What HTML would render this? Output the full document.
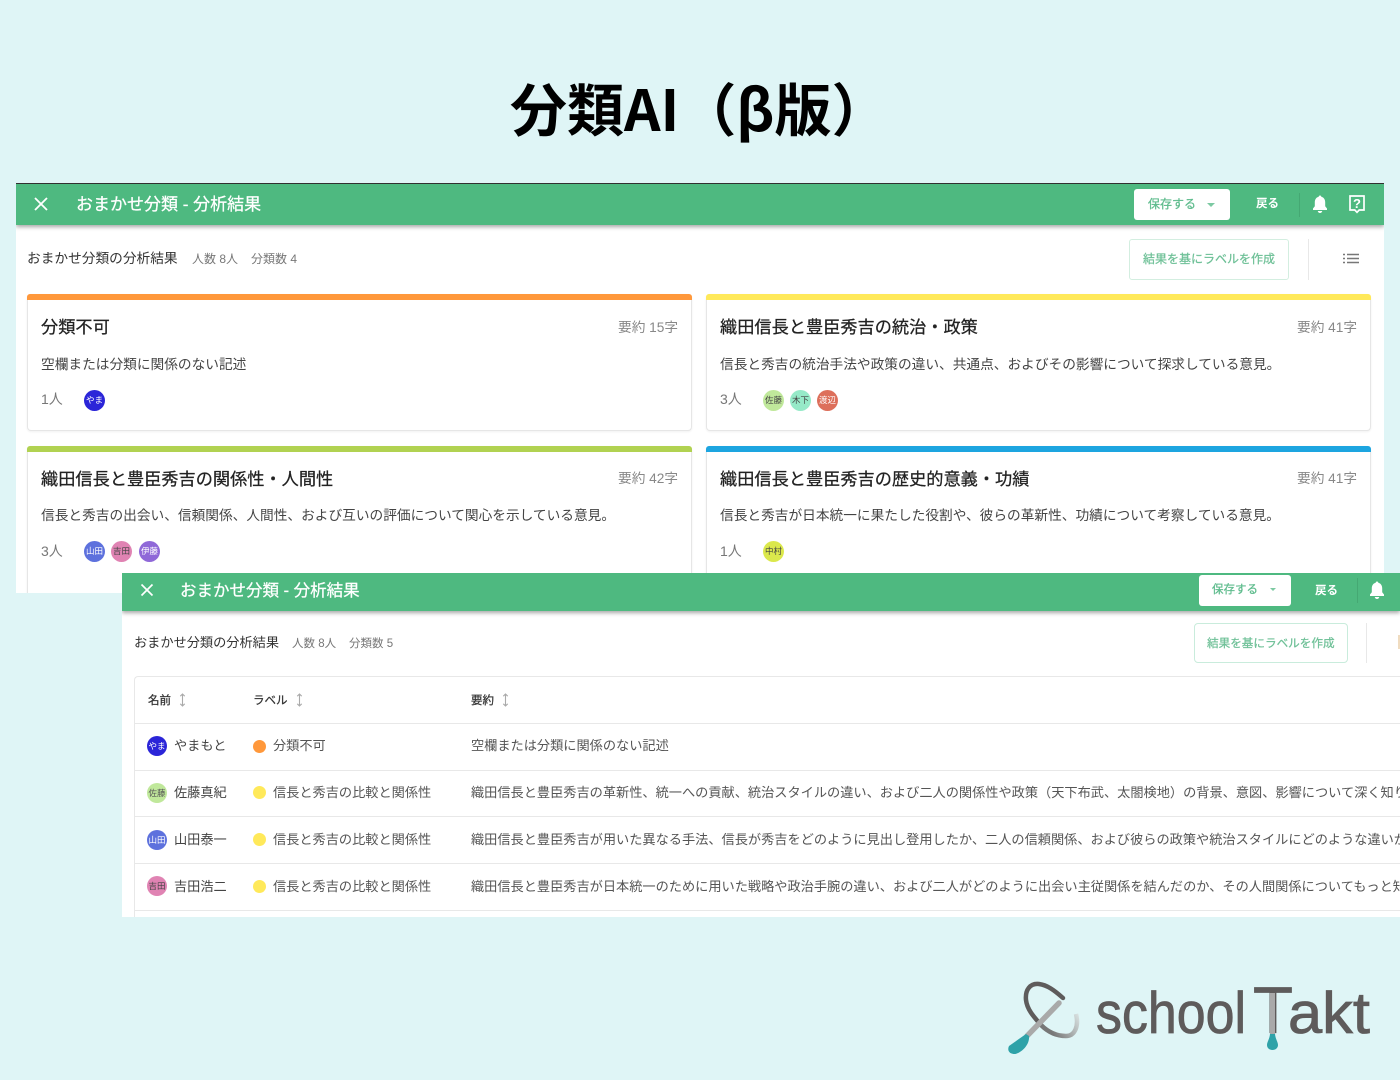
<!DOCTYPE html>
<html lang="ja">
<head>
<meta charset="utf-8">
<title>分類AI（β版）</title>
<style>
html,body{margin:0;padding:0}
body{width:1400px;height:1080px;position:relative;overflow:hidden;background:#dff5f6;font-family:"Liberation Sans","Noto Sans CJK JP",sans-serif;color:#333}
.a{position:absolute;box-sizing:border-box}
.t{position:absolute;white-space:nowrap;line-height:20px;height:20px;margin-top:1px}
.m{-webkit-text-stroke:.25px currentColor}
.panel{position:absolute;background:#fff;overflow:hidden;filter:blur(.3px)}
.bar{position:absolute;left:0;background:#4eb980;box-shadow:0 2px 4px rgba(0,0,0,.35)}
.card{position:absolute;box-sizing:border-box;width:665px;background:#fff;border:1px solid #e6e6e6;border-top:0;border-radius:4px;box-shadow:0 1px 2px rgba(0,0,0,.06)}
.card i{position:absolute;left:-1px;right:-1px;top:0;height:6px;border-radius:3px 3px 0 0}
.av{position:absolute;width:21px;height:21px;border-radius:50%;text-align:center;line-height:21px;font-size:8.5px;white-space:nowrap;overflow:hidden}
.dot{position:absolute;width:13px;height:13px;border-radius:50%}
.btn{position:absolute;box-sizing:border-box;background:#fff;border-radius:3px}
.ln{position:absolute;background:#e8e8e8;height:1px}
</style>
</head>
<body>

<div class="t" style="left:510px;top:66px;height:80px;line-height:80px;font-size:57px;font-weight:700;color:#000;font-family:'Noto Sans CJK JP',sans-serif">分類AI（β版）</div>

<!-- panel 1 -->
<div class="panel" style="left:16px;top:183px;width:1368px;height:410px">
  <div class="a" style="left:0;top:0;width:1368px;height:1px;background:#333"></div>
  <div class="bar" style="top:1px;width:1368px;height:41px"></div>
  <svg class="a" style="left:17px;top:13px" width="16" height="16" viewBox="0 0 16 16"><path d="M2 2L14 14M14 2L2 14" stroke="#fff" stroke-width="1.8" fill="none"/></svg>
  <div class="t m" style="left:60px;top:11px;font-size:17px;color:#fff">おまかせ分類 - 分析結果</div>
  <div class="btn" style="left:1118px;top:6px;width:96px;height:31px"></div>
  <div class="t m" style="left:1132px;top:10px;font-size:12px;color:#5dbb8c">保存する</div>
  <div class="a" style="left:1191px;top:20px;border:4px solid transparent;border-top-color:#7cc9a2;border-bottom:0"></div>
  <div class="t" style="left:1240px;top:10px;font-size:11.5px;font-weight:700;color:#fff">戻る</div>
  <div class="a" style="left:1283px;top:10px;width:1px;height:24px;background:#45a873"></div>
  <svg class="a" style="left:1295px;top:11px" width="18" height="20" viewBox="0 0 18 20"><path d="M9 1.5c-.9 0-1.3.6-1.3 1.3C5 3.5 3.800 5.800 3.800 8.500v3.800L2 14.500V16h14v-1.500l-1.800-2.200V8.500c0-2.700-1.200-5-3.900-5.700C10.300 2.100 9.900 1.500 9 1.500z" fill="#fff"/><path d="M6.800 17a2.200 2 0 0 0 4.400 0z" fill="#fff"/></svg>
  <svg class="a" style="left:1332px;top:11px" width="18" height="20" viewBox="0 0 18 20"><path d="M2 2h14v14h-4.800L9 18.300 6.800 16H2z" fill="none" stroke="#fff" stroke-width="1.700"/><text x="9" y="14" text-anchor="middle" font-size="13" font-weight="700" fill="#fff" font-family="Liberation Sans">?</text></svg>

  <div class="t" style="left:11px;top:65px;font-size:13.7px;color:#333">おまかせ分類の分析結果</div>
  <div class="t" style="left:176px;top:65px;font-size:12px;color:#777">人数 8人</div>
  <div class="t" style="left:235px;top:65px;font-size:12px;color:#777">分類数 4</div>
  <div class="btn" style="left:1113px;top:56px;width:160px;height:41px;border:1.5px solid #d3eee0"></div>
  <div class="t m" style="left:1127px;top:65px;font-size:12px;color:#6ec097">結果を基にラベルを作成</div>
  <div class="a" style="left:1292px;top:56px;width:1px;height:41px;background:#e8e8e8"></div>
  <svg class="a" style="left:1327px;top:70px" width="17" height="11" viewBox="0 0 17 11"><path d="M0 1.500h2M4 1.500h12M0 5.500h2M4 5.500h12M0 9.500h2M4 9.500h12" stroke="#777" stroke-width="1.500" fill="none"/></svg>

  <!-- cards -->
  <div class="card" style="left:11px;top:111px;height:137px"><i style="background:#ff983b"></i></div>
  <div class="t m" style="left:25px;top:133px;font-size:17.2px;color:#222">分類不可</div>
  <div class="t" style="left:602px;top:134px;font-size:13.7px;color:#888">要約 15字</div>
  <div class="t" style="left:25px;top:171px;font-size:13.7px;color:#444">空欄または分類に関係のない記述</div>
  <div class="t" style="left:25px;top:205px;font-size:14px;color:#777">1人</div>
  <div class="av" style="left:68px;top:207px;background:#2b25d8;color:#fff">やま</div>

  <div class="card" style="left:690px;top:111px;height:137px"><i style="background:#ffe95a"></i></div>
  <div class="t m" style="left:704px;top:133px;font-size:17.2px;color:#222">織田信長と豊臣秀吉の統治・政策</div>
  <div class="t" style="left:1281px;top:134px;font-size:13.7px;color:#888">要約 41字</div>
  <div class="t" style="left:704px;top:171px;font-size:13.7px;color:#444">信長と秀吉の統治手法や政策の違い、共通点、およびその影響について探求している意見。</div>
  <div class="t" style="left:704px;top:205px;font-size:14px;color:#777">3人</div>
  <div class="av" style="left:747px;top:207px;background:#c0e89b;color:#444">佐藤</div>
  <div class="av" style="left:774px;top:207px;background:#96eac8;color:#444">木下</div>
  <div class="av" style="left:801px;top:207px;background:#dd6f5b;color:#fff">渡辺</div>

  <div class="card" style="left:11px;top:263px;height:160px"><i style="background:#b1d251"></i></div>
  <div class="t m" style="left:25px;top:285px;font-size:17.2px;color:#222">織田信長と豊臣秀吉の関係性・人間性</div>
  <div class="t" style="left:602px;top:285px;font-size:13.7px;color:#888">要約 42字</div>
  <div class="t" style="left:25px;top:322px;font-size:13.7px;color:#444">信長と秀吉の出会い、信頼関係、人間性、および互いの評価について関心を示している意見。</div>
  <div class="t" style="left:25px;top:357px;font-size:14px;color:#777">3人</div>
  <div class="av" style="left:68px;top:358px;background:#5d71dd;color:#fff">山田</div>
  <div class="av" style="left:95px;top:358px;background:#e083b3;color:#444">吉田</div>
  <div class="av" style="left:123px;top:358px;background:#8f68d8;color:#fff">伊藤</div>

  <div class="card" style="left:690px;top:263px;height:160px"><i style="background:#1da5e0"></i></div>
  <div class="t m" style="left:704px;top:285px;font-size:17.2px;color:#222">織田信長と豊臣秀吉の歴史的意義・功績</div>
  <div class="t" style="left:1281px;top:285px;font-size:13.7px;color:#888">要約 41字</div>
  <div class="t" style="left:704px;top:322px;font-size:13.7px;color:#444">信長と秀吉が日本統一に果たした役割や、彼らの革新性、功績について考察している意見。</div>
  <div class="t" style="left:704px;top:357px;font-size:14px;color:#777">1人</div>
  <div class="av" style="left:747px;top:358px;background:#dbe84c;color:#444">中村</div>
</div>

<!-- panel 2 -->
<div class="panel" style="left:122px;top:573px;width:1278px;height:344px">
  <div class="bar" style="top:0;width:1278px;height:38px"></div>
  <svg class="a" style="left:18px;top:10px" width="14" height="14" viewBox="0 0 14 14"><path d="M1.500 1.500L12.500 12.500M12.500 1.500L1.500 12.500" stroke="#fff" stroke-width="1.700" fill="none"/></svg>
  <div class="t m" style="left:58px;top:7px;font-size:16.5px;color:#fff">おまかせ分類 - 分析結果</div>
  <div class="btn" style="left:1077px;top:2px;width:92px;height:31px"></div>
  <div class="t m" style="left:1090px;top:6px;font-size:11.5px;color:#5dbb8c">保存する</div>
  <div class="a" style="left:1148px;top:15px;border:3.5px solid transparent;border-top-color:#7cc9a2;border-bottom:0"></div>
  <div class="t" style="left:1193px;top:7px;font-size:11.5px;font-weight:700;color:#fff">戻る</div>
  <div class="a" style="left:1235px;top:5px;width:1px;height:25px;background:#45a873"></div>
  <svg class="a" style="left:1246px;top:7px" width="18" height="20" viewBox="0 0 18 20"><path d="M9 1.500c-.9 0-1.300.6-1.300 1.300C5 3.500 3.800 5.800 3.800 8.500v3.800L2 14.500V16h14v-1.500l-1.800-2.200V8.500c0-2.700-1.200-5-3.900-5.700C10.300 2.100 9.900 1.500 9 1.500z" fill="#fff"/><path d="M6.800 17a2.200 2 0 0 0 4.400 0z" fill="#fff"/></svg>

  <div class="t" style="left:12px;top:59px;font-size:13.2px;color:#333">おまかせ分類の分析結果</div>
  <div class="t" style="left:170px;top:60px;font-size:11.5px;color:#777">人数 8人</div>
  <div class="t" style="left:227px;top:60px;font-size:11.5px;color:#777">分類数 5</div>
  <div class="btn" style="left:1072px;top:50px;width:154px;height:40px;border:1.5px solid #c9ecdc;border-radius:4px"></div>
  <div class="t m" style="left:1085px;top:60px;font-size:11.6px;color:#6ec097">結果を基にラベルを作成</div>
  <div class="a" style="left:1244px;top:50px;width:1px;height:40px;background:#e8e8e8"></div>
  <div class="a" style="left:1276px;top:62px;width:2px;height:14px;background:#f0dcc0"></div>

  <!-- table -->
  <div class="a" style="left:12px;top:103px;width:1266px;height:241px;border-left:1px solid #e8e8e8;border-top:1px solid #e8e8e8;border-radius:4px 0 0 0"></div>
  <div class="ln" style="left:12px;top:150px;width:1266px"></div>
  <div class="ln" style="left:12px;top:197px;width:1266px"></div>
  <div class="ln" style="left:12px;top:243px;width:1266px"></div>
  <div class="ln" style="left:12px;top:290px;width:1266px"></div>
  <div class="ln" style="left:12px;top:337px;width:1266px"></div>

  <div class="t m" style="left:26px;top:117px;font-size:11.5px;color:#333">名前</div>
  <div class="t m" style="left:131px;top:117px;font-size:11.5px;color:#333">ラベル</div>
  <div class="t m" style="left:349px;top:117px;font-size:11.5px;color:#333">要約</div>
  <svg class="a" style="left:57px;top:120px" width="7" height="14" viewBox="0 0 7 14"><path d="M3.500 1v12M1.300 3.200L3.500 1l2.200 2.200M1.300 10.800L3.500 13l2.200-2.200" stroke="#aaa" stroke-width="1.100" fill="none"/></svg>
  <svg class="a" style="left:174px;top:120px" width="7" height="14" viewBox="0 0 7 14"><path d="M3.500 1v12M1.300 3.200L3.500 1l2.200 2.200M1.300 10.800L3.500 13l2.200-2.200" stroke="#aaa" stroke-width="1.100" fill="none"/></svg>
  <svg class="a" style="left:380px;top:120px" width="7" height="14" viewBox="0 0 7 14"><path d="M3.500 1v12M1.300 3.200L3.500 1l2.200 2.200M1.300 10.800L3.500 13l2.200-2.200" stroke="#aaa" stroke-width="1.100" fill="none"/></svg>

  <div class="av" style="left:25px;top:163px;width:20px;height:20px;line-height:20px;background:#2b25d8;color:#fff">やま</div>
  <div class="t" style="left:52px;top:162px;font-size:13.2px;color:#444">やまもと</div>
  <div class="dot" style="left:131px;top:167px;background:#ff983b"></div>
  <div class="t" style="left:151px;top:162px;font-size:13.2px;color:#555">分類不可</div>
  <div class="t" style="left:349px;top:162px;font-size:13.2px;color:#555">空欄または分類に関係のない記述</div>

  <div class="av" style="left:25px;top:210px;width:20px;height:20px;line-height:20px;background:#c0e89b;color:#555">佐藤</div>
  <div class="t" style="left:52px;top:209px;font-size:13.2px;color:#444">佐藤真紀</div>
  <div class="dot" style="left:131px;top:213px;background:#ffe95a"></div>
  <div class="t" style="left:151px;top:209px;font-size:13.2px;color:#555">信長と秀吉の比較と関係性</div>
  <div class="t" style="left:349px;top:209px;font-size:13.2px;color:#555">織田信長と豊臣秀吉の革新性、統一への貢献、統治スタイルの違い、および二人の関係性や政策（天下布武、太閤検地）の背景、意図、影響について深く知りたい</div>

  <div class="av" style="left:25px;top:257px;width:20px;height:20px;line-height:20px;background:#5d71dd;color:#fff">山田</div>
  <div class="t" style="left:52px;top:256px;font-size:13.2px;color:#444">山田泰一</div>
  <div class="dot" style="left:131px;top:260px;background:#ffe95a"></div>
  <div class="t" style="left:151px;top:256px;font-size:13.2px;color:#555">信長と秀吉の比較と関係性</div>
  <div class="t" style="left:349px;top:256px;font-size:13.2px;color:#555">織田信長と豊臣秀吉が用いた異なる手法、信長が秀吉をどのように見出し登用したか、二人の信頼関係、および彼らの政策や統治スタイルにどのような違いがあった</div>

  <div class="av" style="left:25px;top:303px;width:20px;height:20px;line-height:20px;background:#e083b3;color:#444">吉田</div>
  <div class="t" style="left:52px;top:303px;font-size:13.2px;color:#444">吉田浩二</div>
  <div class="dot" style="left:131px;top:307px;background:#ffe95a"></div>
  <div class="t" style="left:151px;top:303px;font-size:13.2px;color:#555">信長と秀吉の比較と関係性</div>
  <div class="t" style="left:349px;top:303px;font-size:13.2px;color:#555">織田信長と豊臣秀吉が日本統一のために用いた戦略や政治手腕の違い、および二人がどのように出会い主従関係を結んだのか、その人間関係についてもっと知りたい</div>
</div>

<!-- logo -->
<svg class="a" style="left:0;top:0" width="1400" height="1080" viewBox="0 0 1400 1080">
  <defs>
    <linearGradient id="g" x1="1050" y1="1030" x2="1080" y2="1010" gradientUnits="userSpaceOnUse">
      <stop offset="0" stop-color="#777"/><stop offset="1" stop-color="#e4eeee"/>
    </linearGradient>
  </defs>
  <path d="M1063 998C1054 990 1047 985 1039 984C1030 983 1025 990 1026 1000C1027 1009 1033 1016 1041 1025" fill="none" stroke="#5e5b5b" stroke-width="4.500" stroke-linecap="round"/>
  <path d="M1041 1025C1049 1033 1058 1036 1066 1036C1075 1036 1079 1026 1076 1014" fill="none" stroke="url(#g)" stroke-width="4.500"/>
  <path d="M1059 1003L1027 1036" stroke="#a9a9a9" stroke-width="5.500" stroke-linecap="round"/>
  <path d="M1026 1034L1009 1046C1007 1050 1009 1054 1015 1054C1021 1053 1030 1045 1029 1036z" fill="#2ea2a8"/>
  <g font-family="'Liberation Sans',sans-serif" font-size="58" fill="#5e5b5b" stroke="#5e5b5b" stroke-width=".8">
    <text x="1096" y="1033" textLength="150" lengthAdjust="spacingAndGlyphs">school</text>
    <text x="1253" y="1033" textLength="40" lengthAdjust="spacingAndGlyphs" font-size="66">T</text>
    <text x="1288" y="1033" textLength="82" lengthAdjust="spacingAndGlyphs">akt</text>
  </g>
  <rect x="1270" y="993" width="5" height="41" fill="#a9a9a9"/>
  <path d="M1270 1034h5c.4 5 3 8 3 11 0 3-2.500 5-5.500 5s-5.500-2-5.500-5c0-3 2.600-6 3-11z" fill="#2ea2a8"/>
</svg>
</body>
</html>
